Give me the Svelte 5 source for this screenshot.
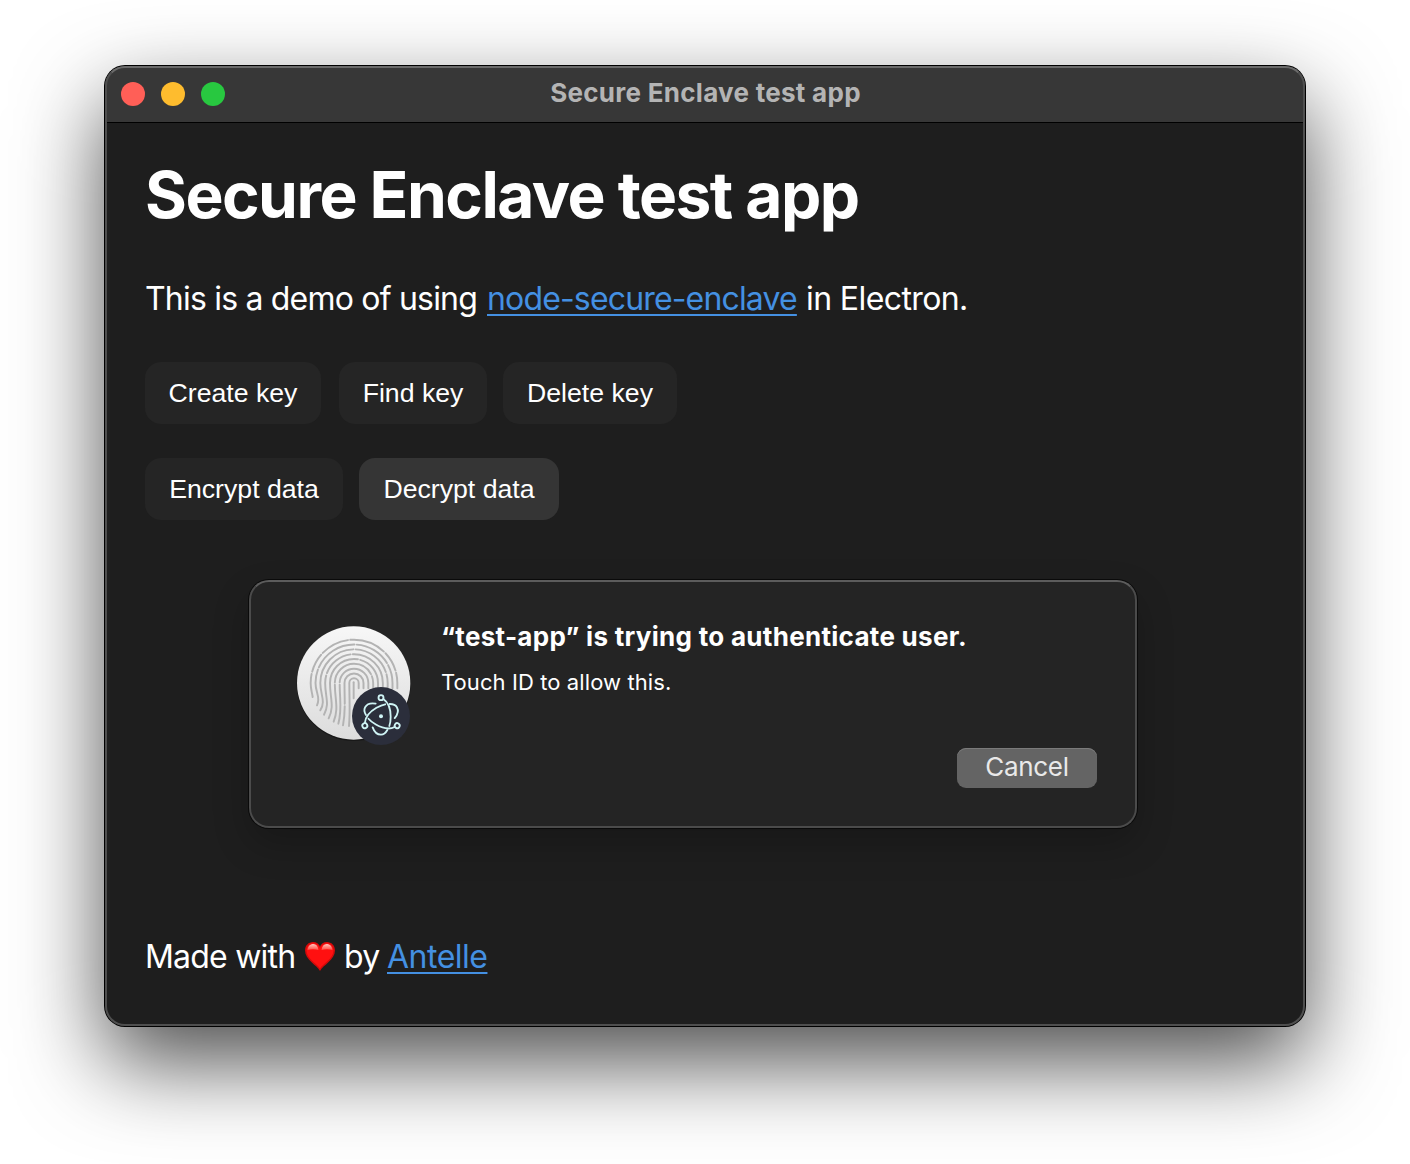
<script>
  const CX = 207;
  const CY = 204;
  // Ridges of the fingerprint: radius, lower-left end point, sideways bend, dash pattern
  const ridges = [
    { r: 14, x: 192, y: 333, bend: 4, dash: '400' },
    { r: 28.5, x: 174, y: 331, bend: 8, dash: '58 7 400' },
    { r: 43, x: 160, y: 326, bend: 12, dash: '118 7 400' },
    { r: 57.5, x: 146, y: 320, bend: 16, dash: '112 7 150 7 400' },
    { r: 72, x: 131, y: 310, bend: 18, dash: '232 7 400' },
    { r: 86.5, x: 117, y: 299, bend: 18, dash: '120 7 95 7 400' },
    { r: 101, x: 106, y: 286, bend: 17, dash: '240 7 120 7 400' },
    { r: 115.5, x: 96, y: 271, bend: 12, dash: '110 7 134 7 110 7 400' },
    { r: 130, x: 83, y: 246, bend: -2, dash: '70 7 58 7 86 7 110 7 60 7 400' }
  ].map((k) => {
    const left = CX - k.r;
    const drop = k.y - CY;
    return {
      dash: k.dash,
      d: `M${k.x} ${k.y}C${k.x + k.bend} ${k.y - drop * 0.35} ${left} ${CY + drop * 0.45} ${left} ${CY}A${k.r} ${k.r} 0 0 1 ${CX + k.r} ${CY}v16`
    };
  });
</script>

<main class="desktop">
  <section class="window">
    <header class="titlebar">
      <div class="lights">
        <i class="light close"></i>
        <i class="light minimise"></i>
        <i class="light zoom"></i>
      </div>
      <span class="title">Secure Enclave test app</span>
    </header>

    <div class="content">
      <h1>Secure Enclave test app</h1>
      <p class="intro">
        <span class="a">This is a demo of using</span>
        <a class="b" href="#repo"><span>node-secure-enclave</span></a>
        <span class="c">in Electron.</span>
      </p>

      <div class="row">
        <button class="w1">Create key</button>
        <button class="w2">Find key</button>
        <button class="w3">Delete key</button>
      </div>
      <div class="row second">
        <button class="w4">Encrypt data</button>
        <button class="w5 active">Decrypt data</button>
      </div>

      <div class="dialog">
        <svg class="touch" viewBox="0 0 420 420" fill="none">
          <defs>
            <linearGradient id="disc" x1="0" y1="0" x2="0" y2="1">
              <stop offset="0" stop-color="#f7f7f7" />
              <stop offset="1" stop-color="#dcdcdc" />
            </linearGradient>
          </defs>
          <circle cx="206" cy="207" r="171" fill="#000" opacity=".35" />
          <circle cx="206" cy="204" r="170" fill="url(#disc)" />
          <g stroke="#b3b3b3" stroke-width="5.8" stroke-linecap="round">
            {#each ridges as ridge}
              <path d={ridge.d} stroke-dasharray={ridge.dash} />
            {/each}
            <path d="M206 202V250" />
          </g>
          <circle cx="288" cy="303" r="87" fill="#2b2e3b" />
          <g stroke="#cff4f5" stroke-width="5.5" stroke-linecap="round">
            {#each [0, 120, 240] as angle}
              <g transform="rotate({angle} 288 304)">
                <circle cx="288" cy="248" r="7.5" />
                <path d="M295 252C308 261 317 282 317 305C317 315 316 325 313 333" />
                <path d="M263 337C268 351 277 359 288 359C296 359 302 354 307 345" />
              </g>
            {/each}
          </g>
          <circle cx="288" cy="304" r="6" fill="#cff4f5" />
        </svg>
        <div class="message">
          <strong>“test-app” is trying to authenticate user.</strong>
          <span>Touch ID to allow this.</span>
        </div>
        <button class="cancel">Cancel</button>
      </div>

      <p class="made">
        <span class="d">Made with</span>
        <svg class="heart" viewBox="0 0 30 29">
          <defs>
            <linearGradient id="gloss" x1="0" y1="0" x2="0" y2="1">
              <stop offset="0" stop-color="#ffc5bd" />
              <stop offset="1" stop-color="#ff4a40" />
            </linearGradient>
          </defs>
          <path d="M15 29C12 23 0 18 0 8.500C0 3.500 3.500 0 8 0C11.500 0 14 2 15 4.500C16 2 18.500 0 22 0C26.500 0 30 3.500 30 8.500C30 18 18 23 15 29Z" fill="#d40a0a" />
          <path d="M15 26.500C12 21.500 1.500 16.500 1.500 8.500C1.500 4.500 4.500 1.200 8 1.200C11.500 1.200 14 3.500 15 6.500C16 3.500 18.500 1.200 22 1.200C25.500 1.200 28.500 4.500 28.500 8.500C28.500 16.500 18 21.500 15 26.500Z" fill="#ff1010" />
          <path d="M2.500 8C3 3.500 6 2 8.500 2C11 2 13 4 13.500 8Q8 6.500 2.500 8ZM16.500 8C17 4 19 2 21.500 2C24 2 27 3.500 27.500 8Q22 6.500 16.500 8Z" fill="url(#gloss)" />
        </svg>
        <span class="e">by</span>
        <a class="f" href="#antelle">Antelle</a>
      </p>
    </div>
  </section>
</main>

<style>
  :global(body) {
    background: #fff;
  }
  .desktop {
    box-sizing: border-box;
    width: 1410px;
    height: 1164px;
    padding: 66px 105px 0;
    overflow: hidden;
    font-family: Inter, 'Liberation Sans', sans-serif;
    color: #fff;
    white-space: nowrap;
  }
  .window {
    position: relative;
    height: 960px;
    border-radius: 20px;
    background: #1e1e1e;
    box-shadow:
      0 0 0 1px #000,
      0 36px 88px rgba(0, 0, 0, 0.7);
  }
  .window::after {
    content: '';
    position: absolute;
    inset: 0;
    border: 2px solid #4f4f4f;
    border-top-color: #6a6a6a;
    border-radius: 20px;
    pointer-events: none;
  }
  .titlebar {
    display: grid;
    grid-template-columns: 1fr auto 1fr;
    align-items: center;
    box-sizing: border-box;
    height: 57px;
    padding: 0 16px;
    border-bottom: 1px solid #000;
    border-radius: 20px 20px 0 0;
    background: #373737;
  }
  .lights {
    display: flex;
    gap: 16px;
  }
  .light {
    width: 24px;
    height: 24px;
    border-radius: 50%;
  }
  .close { background: #ff5f57; }
  .minimise { background: #febc2e; }
  .zoom { background: #28c840; }
  .title {
    padding: 0 0 2px 1px;
    color: #b4b4b4;
    font-size: 26px;
    font-weight: 650;
    line-height: 32px;
    letter-spacing: 0.28px;
  }
  .content {
    padding: 32px 41px 0 40px;
  }
  h1 {
    margin: 0;
    font-size: 64px;
    font-weight: 700;
    line-height: 80px;
    letter-spacing: -1.53px;
  }
  p {
    display: flex;
    margin: 0;
    font-size: 32px;
    line-height: 40px;
    letter-spacing: -0.8px;
  }
  a {
    color: #4490e2;
    text-decoration: underline;
    text-decoration-thickness: 2px;
    text-underline-offset: 4px;
    text-decoration-skip-ink: none;
  }
  .intro {
    margin-top: 44px;
  }
  .a { width: 342px; }
  .b { width: 319px; letter-spacing: -0.84px; }
  .c { letter-spacing: -0.6px; }
  .row {
    display: flex;
    gap: 16px;
    margin-top: 43px;
  }
  .second {
    margin-top: 34px;
  }
  button {
    flex: none;
    height: 62px;
    padding: 0;
    border: 0;
    border-radius: 16px;
    background: #252525;
    color: #fff;
    font: 26.67px/62px 'Liberation Sans', Arial, sans-serif;
  }
  .w1 { width: 176px; margin-right: 2px; }
  .w2 { width: 148px; }
  .w3 { width: 174px; }
  .w4 { width: 198px; }
  .w5 { width: 200px; }
  .active { background: #353535; }
  .dialog {
    display: flex;
    box-sizing: border-box;
    width: 888px;
    height: 248px;
    margin: 60px 0 0 104px;
    padding: 33px 38px 0 34px;
    border: 2px solid #4b4b4b;
    border-top-color: #5c5c5c;
    border-radius: 20px;
    background: #242424;
    box-shadow:
      0 0 0 1px #0a0a0a,
      0 16px 36px rgba(0, 0, 0, 0.22);
  }
  .touch {
    flex: none;
    width: 140px;
    height: 140px;
  }
  .message {
    display: flex;
    flex-direction: column;
    width: 533px;
    margin-left: 16px;
    padding-top: 5px;
  }
  .message strong {
    font-size: 26px;
    font-weight: 700;
    line-height: 34px;
    letter-spacing: 0.29px;
  }
  .message span {
    margin-top: 14px;
    font-size: 22px;
    line-height: 28px;
    letter-spacing: 0.09px;
  }
  .cancel {
    align-self: flex-start;
    width: 140px;
    height: 40px;
    margin: 133px 0 0 -17px;
    padding-bottom: 2px;
    border-radius: 9px;
    background: #646464;
    box-shadow: inset 0 1px 0 #7b7b7b;
    color: #e9e9e9;
    font: 26px/38px Inter, sans-serif;
    letter-spacing: -0.3px;
  }
  .made {
    align-items: flex-start;
    margin-top: 109px;
  }
  .d { width: 160px; }
  .heart {
    width: 30px;
    height: 29px;
    margin-top: 5px;
  }
  .e {
    width: 43px;
    margin-left: 9px;
  }
  .f { letter-spacing: -0.5px; }
</style>
